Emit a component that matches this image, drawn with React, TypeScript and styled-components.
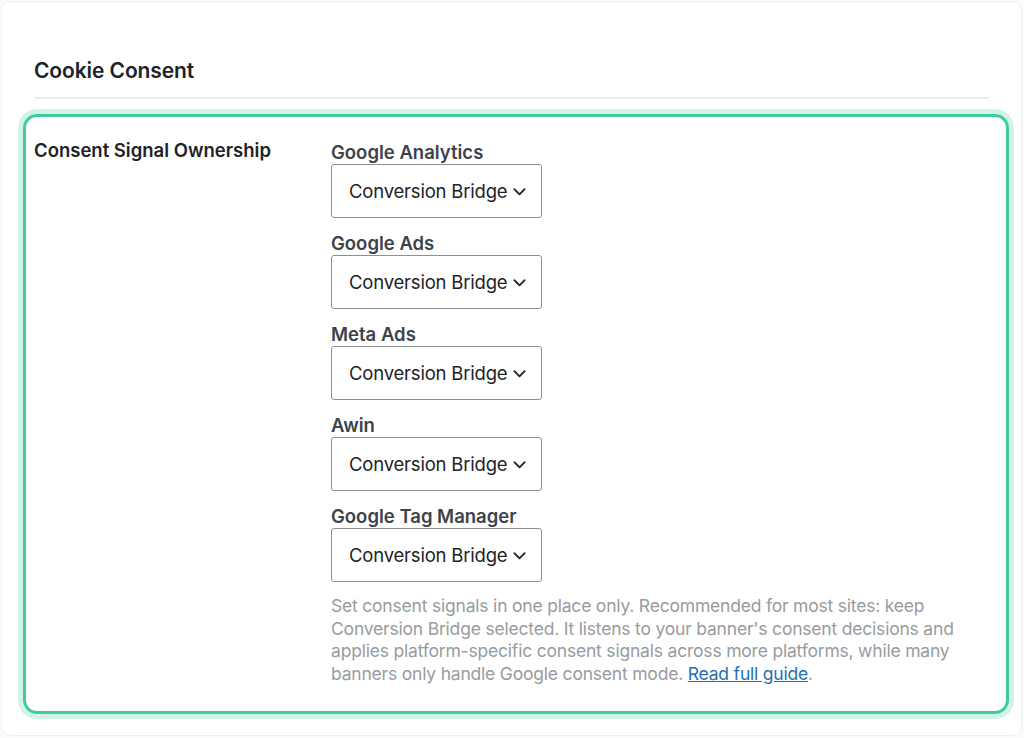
import React from "react";
import styled, { createGlobalStyle } from "styled-components";

const GlobalStyle = createGlobalStyle`
  html, body {
    margin: 0;
    padding: 0;
    background: #fbfbfb;
  }
  body {
    font-family: Inter, "Noto Sans", "Liberation Sans", sans-serif;
    -webkit-font-smoothing: antialiased;
  }
`;

const Card = styled.div`
  box-sizing: border-box;
  margin: 1px 2px 0 1px;
  height: 735px;
  background: #fff;
  border: 1px solid #efefef;
  border-radius: 9px;
  padding: 46px 6px 0 14px;
`;

const SectionTitle = styled.h2`
  margin: 0 26px 0 18px;
  font-size: 21px;
  font-weight: 600;
  color: #1d2327;
  line-height: 45px;
  letter-spacing: -0.1px;
  border-bottom: 2px solid #e6f0ed;
  padding-bottom: 4px;
`;

const Highlight = styled.div`
  margin: 15px 6px 0 7px;
  border: 3px solid #3fcc98;
  border-radius: 14px;
  box-shadow: 0 0 0 5px #d2f4e6;
  padding: 23px 8px 26px 8px;
  display: grid;
  grid-template-columns: 297px 1fr;
`;

const RowLabel = styled.div`
  font-size: 18.5px;
  font-weight: 600;
  color: #1d2327;
  line-height: 24px;
  margin-top: -2px;
`;

const Fields = styled.div`
  display: flex;
  flex-direction: column;
`;

const Field = styled.div`
  display: flex;
  flex-direction: column;
  margin-bottom: 13px;
`;

const FieldLabel = styled.label`
  font-size: 18.5px;
  font-weight: 600;
  color: #3c434a;
  line-height: 24px;
`;

const SelectBox = styled.div`
  box-sizing: border-box;
  width: 211px;
  height: 54px;
  border: 1px solid #8c8f94;
  border-radius: 3px;
  background: #fff;
  display: flex;
  align-items: center;
  padding: 0 14px 0 17px;
  justify-content: space-between;
`;

const SelectText = styled.span`
  font-size: 18.5px;
  color: #1d2327;
  white-space: nowrap;
  letter-spacing: -0.2px;
`;

const Chevron = styled.svg`
  width: 15px;
  height: 15px;
  flex: none;
`;

const Description = styled.p`
  margin: 0;
  max-width: 640px;
  font-size: 17.5px;
  line-height: 22.5px;
  color: #989b9f;
  letter-spacing: -0.2px;
`;

const GuideLink = styled.a`
  color: #2271b1;
  text-decoration: underline;
`;

const platforms = [
  "Google Analytics",
  "Google Ads",
  "Meta Ads",
  "Awin",
  "Google Tag Manager",
];

const Select: React.FC<{ value: string }> = ({ value }) => (
  <SelectBox>
    <SelectText>{value}</SelectText>
    <Chevron viewBox="0 0 16 16" fill="none">
      <path
        d="M2.5 5.5 8 11l5.5-5.5"
        stroke="#1d2327"
        strokeWidth="2"
        strokeLinecap="round"
        strokeLinejoin="round"
      />
    </Chevron>
  </SelectBox>
);

const App: React.FC = () => {
  return (
    <>
      <GlobalStyle />
      <Card>
        <SectionTitle>Cookie Consent</SectionTitle>
        <Highlight>
          <RowLabel>Consent Signal Ownership</RowLabel>
          <Fields>
            {platforms.map((name) => (
              <Field key={name}>
                <FieldLabel>{name}</FieldLabel>
                <Select value="Conversion Bridge" />
              </Field>
            ))}
            <Description>
              Set consent signals in one place only. Recommended for most sites: keep
              Conversion Bridge selected. It listens to your banner's consent decisions and
              applies platform-specific consent signals across more platforms, while many
              banners only handle Google consent mode.{" "}
              <GuideLink href="#">Read full guide</GuideLink>.
            </Description>
          </Fields>
        </Highlight>
      </Card>
    </>
  );
};

export default App;
